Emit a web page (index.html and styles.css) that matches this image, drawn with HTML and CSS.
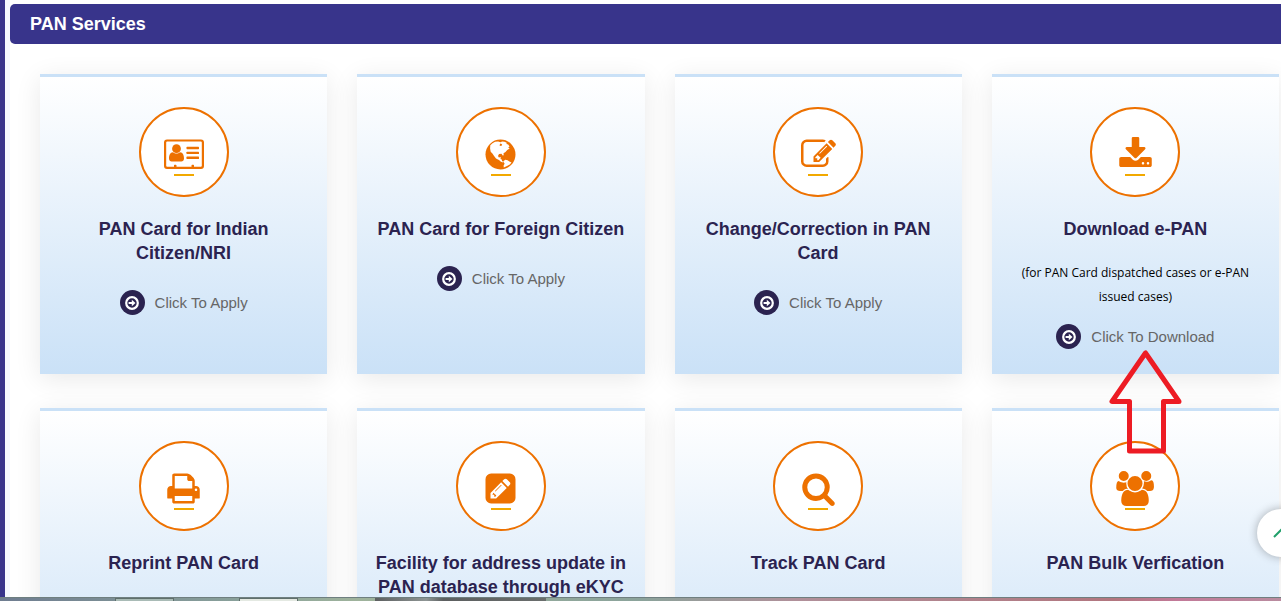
FILE: index.html
```html
<!DOCTYPE html>
<html lang="en">
<head>
  <meta charset="UTF-8" />
  <meta name="viewport" content="width=device-width, initial-scale=1.0"/>
  <title>PAN Services</title>
  <link rel="stylesheet" href="styles.css">
</head>
<body>
  <svg class="sprite" aria-hidden="true">
    <symbol id="go" viewBox="0 0 16 16">
      <circle cx="8" cy="8" r="5.8" fill="none" stroke="currentColor" stroke-width="2.2"/>
      <path d="M4.600 7h3.200V4.700L11.500 8l-3.700 3.300V9H4.600z" fill="currentColor"/>
    </symbol>
  </svg>

  <main class="page">
    <h1 class="page-title">PAN Services</h1>

    <div class="cards">
      <section class="card">
        <div class="icon">
          <svg class="wide" viewBox="0 0 40 35">
            <path fill-rule="evenodd" d="M3 2.500h34a3 3 0 0 1 3 3v23.500a3 3 0 0 1-3 3H3a3 3 0 0 1-3-3V5.500a3 3 0 0 1 3-3zM3.200 4.600a1 1 0 0 0-1 1v23.200a1 1 0 0 0 1 1H10v-1.400a.6.6 0 0 1 .6-.6h1.300a.6.6 0 0 1 .6.6v1.400h15v-1.400a.6.6 0 0 1 .6-.6h1.300a.6.6 0 0 1 .6.6v1.400h6.800a1 1 0 0 0 1-1V5.600a1 1 0 0 0-1-1z"/>
            <circle cx="12.500" cy="11.700" r="4.400"/>
            <path d="M9 15.200c1 .9 2.200 1.400 3.500 1.400s2.500-.5 3.500-1.400c3 .1 4 3.100 4 6.300 0 1.800-1.200 3-2.600 3H7.600c-1.400 0-2.600-1.200-2.600-3 0-3.200 1-6.200 4-6.300z"/>
            <rect x="22.500" y="9.800" width="12.500" height="2.400" rx=".6"/>
            <rect x="22.500" y="14.700" width="12.500" height="2.400" rx=".6"/>
            <rect x="22.500" y="19.600" width="12.500" height="2.400" rx=".6"/>
          </svg>
        </div>
        <h2>PAN Card for Indian Citizen/NRI</h2>
        <a class="action" href="#"><span class="go"><svg><use href="#go"/></svg></span>Click To Apply</a>
      </section>

      <section class="card">
        <div class="icon">
          <svg viewBox="0 0 35 35">
            <circle cx="17.500" cy="17.500" r="15"/>
            <path class="land" d="M7.300 8.200l2.200-2 2.600-1.400 3-.2 2.400.6 1.600-.8 2.400.3 2.200 1-.2 1.300 1.700.4 1.300 2-1.300 1.100 1.500.9-2.500 1.600-1.700 1.900-2 1.300.2 2.100-1 .1-1.200-1.600-2.500.3-1 1.900.9 1.500 1.900-.4-.3 1.900 1.300.6.300 1.600 1.300.4-.2.800-2.300-.7-1.900-1.800-3-1.400-1.900-2.600-1.700-2.500-1.700-1.700-.6-3.100z"/>
            <path class="land" d="M20.300 24.300l2-1.500 2.300.5 1.800 1.300 2.100.8-1.700 2-2.800 1.700-3.200 1.300-.2-1.900 1-1.700z"/>
            <path d="M17.300 6.600l1.300.3.600 1.200-1.200.9-1.500-.5z"/>
          </svg>
        </div>
        <h2>PAN Card for Foreign Citizen</h2>
        <a class="action" href="#"><span class="go"><svg><use href="#go"/></svg></span>Click To Apply</a>
      </section>

      <section class="card">
        <div class="icon">
          <svg viewBox="0 0 1792 1792">
            <path d="M888 1184l116-116-152-152-116 116v56h96v96h56zm440-720q-16-16-33 1l-350 350q-17 17-1 33t33-1l350-350q17-17 1-33zm80 594v190q0 119-84.500 203.500t-203.500 84.500h-832q-119 0-203.500-84.500t-84.500-203.500v-832q0-119 84.500-203.500t203.500-84.500h832q63 0 117 25 15 7 18 23 3 17-9 29l-49 49q-14 14-32 8-23-6-45-6h-832q-66 0-113 47t-47 113v832q0 66 47 113t113 47h832q66 0 113-47t47-113v-126q0-13 9-22l64-64q15-15 35-7t20 29zm-96-738l288 288-672 672h-288v-288zm444 132l-92 92-288-288 92-92q28-28 68-28t68 28l152 152q28 28 28 68t-28 68z"/>
          </svg>
        </div>
        <h2>Change/Correction in PAN Card</h2>
        <a class="action" href="#"><span class="go"><svg><use href="#go"/></svg></span>Click To Apply</a>
      </section>

      <section class="card">
        <div class="icon">
          <svg viewBox="0 0 1792 1792">
            <path d="M1344 1344q0-26-19-45t-45-19-45 19-19 45 19 45 45 19 45-19 19-45zm256 0q0-26-19-45t-45-19-45 19-19 45 19 45 45 19 45-19 19-45zm128-224v320q0 40-28 68t-68 28h-1472q-40 0-68-28t-28-68v-320q0-40 28-68t68-28h465l135 136q58 56 136 56t136-56l136-136h464q40 0 68 28t28 68zm-325-569q17 41-14 70l-448 448q-18 19-45 19t-45-19l-448-448q-31-29-14-70 17-39 59-39h256v-448q0-26 19-45t45-19h256q26 0 45 19t19 45v448h256q42 0 59 39z"/>
          </svg>
        </div>
        <h2>Download e-PAN</h2>
        <p>(for PAN Card dispatched cases or e-PAN issued cases)</p>
        <a class="action" href="#"><span class="go"><svg><use href="#go"/></svg></span>Click To Download</a>
      </section>

      <section class="card">
        <div class="icon">
          <svg viewBox="0 0 1792 1792">
            <path d="M448 1536h896v-256h-896v256zm0-640h896v-384h-160q-40 0-68-28t-28-68v-160h-640v640zm1152 64q0-26-19-45t-45-19-45 19-19 45 19 45 45 19 45-19 19-45zm128 0v416q0 13-9.500 22.500t-22.500 9.500h-224v160q0 40-28 68t-68 28h-960q-40 0-68-28t-28-68v-160h-224q-13 0-22.500-9.500t-9.500-22.500v-416q0-79 56.500-135.500t135.500-56.500h64v-544q0-40 28-68t68-28h672q40 0 88 20t76 48l152 152q28 28 48 76t20 88v256h64q79 0 135.500 56.500t56.500 135.500z"/>
          </svg>
        </div>
        <h2>Reprint PAN Card</h2>
      </section>

      <section class="card">
        <div class="icon">
          <svg viewBox="-128 0 1792 1792">
            <path d="M404 1108l152 152-52 52h-56v-96h-96zm414-390q14 13-3 30l-291 291q-17 17-30 3-14-13 3-30l291-291q17-17 30-3zm-274 690l544-544-288-288-544 544v288h288zm608-608l92-92q28-28 28-68t-28-68l-152-152q-28-28-68-28t-68 28l-92 92zm384-384v960q0 119-84.500 203.500t-203.500 84.500h-960q-119 0-203.500-84.500t-84.500-203.500v-960q0-119 84.500-203.500t203.500-84.500h960q119 0 203.500 84.500t84.500 203.500z"/>
          </svg>
        </div>
        <h2>Facility for address update in PAN database through eKYC</h2>
      </section>

      <section class="card">
        <div class="icon">
          <svg viewBox="0 0 1792 1792">
            <path d="M1216 832q0-185-131.500-316.500t-316.500-131.500-316.500 131.500-131.500 316.500 131.500 316.500 316.500 131.500 316.500-131.500 131.500-316.500zm512 832q0 52-38 90t-90 38q-54 0-90-38l-343-342q-179 124-399 124-143 0-273.500-55.500t-225-150-150-225-55.500-273.500 55.500-273.500 150-225 225-150 273.500-55.500 273.500 55.500 225 150 150 225 55.500 273.500q0 220-124 399l343 343q37 37 37 90z"/>
          </svg>
        </div>
        <h2>Track PAN Card</h2>
      </section>

      <section class="card">
        <div class="icon">
          <svg class="wide" viewBox="-64 0 2048 1792">
            <path d="M593 896q-162 5-265 128h-134q-82 0-138-40.500t-56-118.500q0-353 124-353 6 0 43.500 21t97.500 42.500 119 21.500q67 0 133-23-5 37-5 66 0 159 92.500 299zm1071 637q0 120-73 189.500t-194 69.500h-874q-121 0-194-69.500t-73-189.500q0-53 3.500-103.500t14-109 26.500-108.500 43-97.500 62-81 85.500-53.500 111.500-20q10 0 43 21.500t73 48 107 48 135 21.500 135-21.500 107-48 73-48 43-21.500q61 0 111.500 20t85.500 53.500 62 81 43 97.500 26.500 108.500 14 109 3.500 103.500zm-1024-1277q0 106-75 181t-181 75-181-75-75-181 75-181 181-75 181 75 75 181zm704 384q0 159-112.500 271.500t-271.500 112.500-271.500-112.500-112.500-271.500 112.500-271.500 271.500-112.500 271.500 112.500 112.500 271.500zm576 225q0 78-56 118.500t-138 40.500h-134q-103-123-265-128 92-140 92-299 0-29-5-66 66 23 133 23 59 0 119-21.500t97.500-42.500 43.500-21q124 0 124 353zm-128-609q0 106-75 181t-181 75-181-75-75-181 75-181 181-75 181 75 75 181z"/>
          </svg>
        </div>
        <h2>PAN Bulk Verfication</h2>
      </section>
    </div>

    <svg class="pointer" viewBox="0 0 74 106" aria-hidden="true">
      <path d="M37.500 4L4 52.500h17.500V102h34V52.500H71z"/>
    </svg>

    <button class="to-top" type="button" aria-label="Back to top">
      <svg viewBox="0 0 16 10"><path d="M1 9l7-7 7 7"/></svg>
    </button>
  </main>

  <footer class="taskbar">
    <span class="task"></span>
    <span class="task active"></span>
    <span class="preview"></span>
  </footer>
</body>
</html>
```
FILE: styles.css
```css
* {
  box-sizing: border-box;
}

body {
  margin: 0;
  height: 100vh;
  display: flex;
  flex-direction: column;
  overflow: hidden;
  font-family: "Liberation Sans", Arial, sans-serif;
  background: #fff;
}

.sprite {
  display: none;
}

.page {
  position: relative;
  flex: 1;
  min-height: 0;
  overflow: hidden;
  padding: 4px 0 0 5px;
  border-left: 5px solid #38348b;
  background: linear-gradient(to right, #f5f8fe 5px, #fff 5px);
}

.page-title {
  margin: 0;
  padding: 0 20px;
  border-radius: 5px 0 0 5px;
  background: #38348b;
  color: #fff;
  font-size: 18px;
  line-height: 40px;
}

.cards {
  display: grid;
  grid-template-columns: repeat(4, 1fr);
  grid-auto-rows: minmax(300px, auto);
  gap: 34px 30px;
  padding: 30px 2px 30px 30px;
}

.card {
  display: flex;
  flex-direction: column;
  align-items: center;
  padding: 30px 15px 25px;
  border-top: 3px solid #cae1f7;
  background: linear-gradient(#fff, #cae1f7);
  box-shadow: 0 5px 25px rgba(0, 0, 0, 0.09);
  text-align: center;
}

.icon {
  display: flex;
  flex-direction: column;
  align-items: center;
  gap: 2px;
  width: 90px;
  height: 90px;
  padding-top: 28px;
  border: 2px solid #ed7100;
  border-radius: 50%;
  background: #fff;
}

.icon svg {
  width: 35px;
  height: 35px;
  fill: #ed7100;
}

.icon .wide {
  width: 40px;
}

.icon .land {
  fill: #fff;
}

.icon::after {
  content: "";
  width: 20px;
  height: 2px;
  background: #f2a900;
}

.card h2 {
  margin: 20px 0 0;
  color: #2b2350;
  font-size: 18px;
  line-height: 24px;
}

.card p {
  margin: 20px 0 0;
  color: #000;
  font-family: "Open Sans", "Noto Sans", sans-serif;
  font-size: 12px;
  line-height: 24px;
}

.action {
  display: flex;
  align-items: center;
  gap: 10px;
  margin-top: 25px;
  color: #666;
  font-size: 15px;
  text-decoration: none;
}

p + .action {
  margin-top: 15px;
}

.go {
  display: flex;
  align-items: center;
  justify-content: center;
  width: 25px;
  height: 25px;
  border-radius: 50%;
  background: #2b2350;
  color: #fff;
}

.go svg {
  width: 16px;
  height: 16px;
}

/* red arrow lying over the cards */
.pointer {
  position: absolute;
  top: 349px;
  right: 99px;
  width: 74px;
  height: 106px;
  fill: none;
  stroke: #ed1c24;
  stroke-width: 5;
  stroke-linejoin: round;
}

.to-top {
  position: absolute;
  right: -24px;
  bottom: 40px;
  display: flex;
  align-items: center;
  justify-content: center;
  width: 48px;
  height: 48px;
  padding: 0;
  border: 0;
  border-radius: 50%;
  background: #fff;
  box-shadow: 0 0 10px rgba(0, 0, 0, 0.3);
}

.to-top svg {
  width: 16px;
  height: 10px;
  fill: none;
  stroke: #22a06b;
  stroke-width: 2;
}

.taskbar {
  display: flex;
  gap: 65px;
  height: 4px;
  padding-left: 115px;
  border-top: 1px solid #6f7f80;
  background: linear-gradient(to right, #6f7d90, #8ba39b 20%, #9fb39c 28%, #8ba39b 50%, #b0909a 62%, #b2767f 87%, #c27a99 92%, #b98c9f);
}

.task {
  width: 59px;
  border: 1px solid #5f6f6c;
  border-bottom: 0;
  background: #a9bbb6;
}

.active {
  background: #e4e9e2;
}

.preview {
  width: 171px;
  margin-left: 12px;
  background: linear-gradient(to right, #5c5f60, #8f9695 30%, #5c5f60 40%, #6a6e6d);
}
```
